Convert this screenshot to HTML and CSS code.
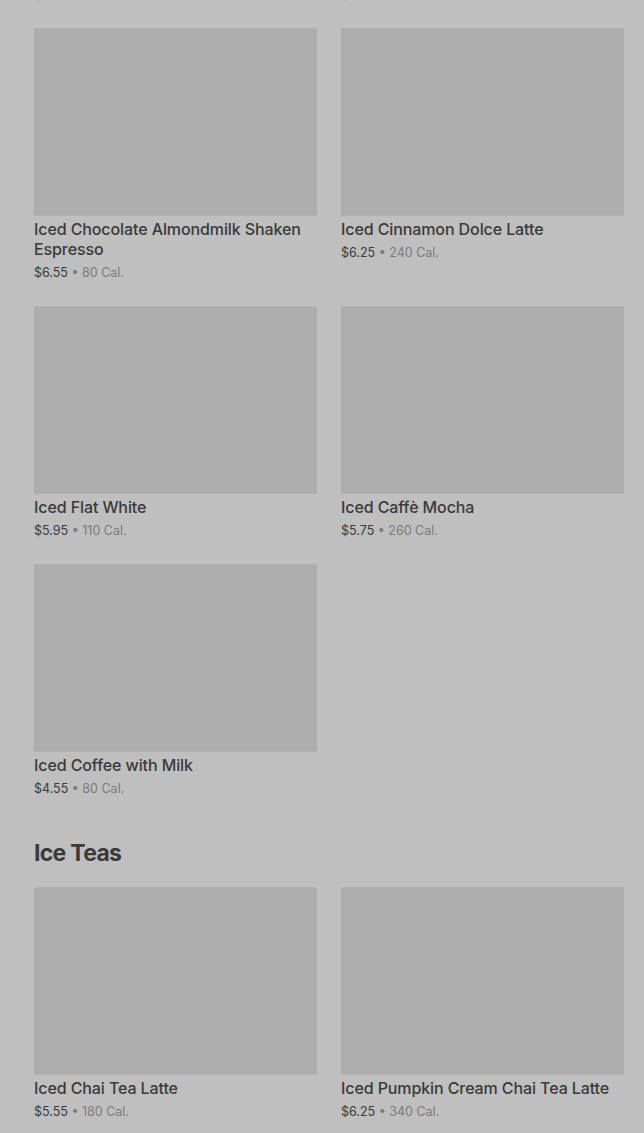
FILE: index.html
```html
<!DOCTYPE html>
<html lang="en">
<head>
    <meta charset="UTF-8">
    <meta name="viewport" content="width=device-width, initial-scale=1.0">
    <title>Menu</title>
    <link rel="stylesheet" href="styles.css">
</head>
<body>
    <div class="page">
        <section class="menu-section">
            <div class="item-grid">
                <div class="item">
                    <div class="item-image"></div>
                    <div class="item-name">Iced Shaken Espresso</div>
                    <div class="item-meta"><span class="price">$5.45</span> • 80 Cal.</div>
                </div>
                <div class="item">
                    <div class="item-image"></div>
                    <div class="item-name">Iced Caffè Latte</div>
                    <div class="item-meta"><span class="price">$5.25</span> • 130 Cal.</div>
                </div>

                <div class="item">
                    <div class="item-image"></div>
                    <div class="item-name">Iced Chocolate Almondmilk Shaken Espresso</div>
                    <div class="item-meta"><span class="price">$6.55</span> • 80 Cal.</div>
                </div>
                <div class="item">
                    <div class="item-image"></div>
                    <div class="item-name">Iced Cinnamon Dolce Latte</div>
                    <div class="item-meta"><span class="price">$6.25</span> • 240 Cal.</div>
                </div>

                <div class="item">
                    <div class="item-image"></div>
                    <div class="item-name">Iced Flat White</div>
                    <div class="item-meta"><span class="price">$5.95</span> • 110 Cal.</div>
                </div>
                <div class="item">
                    <div class="item-image"></div>
                    <div class="item-name">Iced Caffè Mocha</div>
                    <div class="item-meta"><span class="price">$5.75</span> • 260 Cal.</div>
                </div>

                <div class="item">
                    <div class="item-image"></div>
                    <div class="item-name">Iced Coffee with Milk</div>
                    <div class="item-meta"><span class="price">$4.55</span> • 80 Cal.</div>
                </div>
            </div>
        </section>

        <section class="menu-section">
            <h2 class="section-title">Ice Teas</h2>
            <div class="item-grid">
                <div class="item">
                    <div class="item-image"></div>
                    <div class="item-name">Iced Chai Tea Latte</div>
                    <div class="item-meta"><span class="price">$5.55</span> • 180 Cal.</div>
                </div>
                <div class="item">
                    <div class="item-image"></div>
                    <div class="item-name">Iced Pumpkin Cream Chai Tea Latte</div>
                    <div class="item-meta"><span class="price">$6.25</span> • 340 Cal.</div>
                </div>
            </div>
        </section>
    </div>
</body>
</html>
```

FILE: styles.css
```css
:root {
    --overlay-bg: #bfbfbf;
    --image-bg: #adadad;
    --text-dark: #3a3a3a;
    --text-muted: #7b7b7b;
}

body {
    margin: 0;
    padding: 0;
    background: var(--overlay-bg);
    font-family: Inter, "Noto Sans", sans-serif;
    color: var(--text-dark);
    overflow: hidden;
}

.page {
    padding: 0 20px 0 34px;
    margin-top: -230px;
}

.menu-section {
    margin-bottom: 40px;
}

.item-grid {
    display: grid;
    grid-template-columns: 283px 283px;
    column-gap: 24px;
    row-gap: 24px;
}

.item-image {
    height: 188px;
    background: var(--image-bg);
    box-shadow: inset 0 1px 0 #b4b4b4, inset 0 -1px 0 #b2b2b2;
}

.item-name {
    margin-top: 3px;
    font-size: 16px;
    line-height: 20px;
    font-weight: 500;
    letter-spacing: -0.1px;
}

.item-meta {
    margin-top: 5px;
    font-size: 12.5px;
    line-height: 18px;
    color: var(--text-muted);
}

.price {
    color: var(--text-dark);
}

.section-title {
    margin: 0 0 19px;
    font-size: 23px;
    line-height: 30px;
    font-weight: 700;
    letter-spacing: -0.7px;
}
```
